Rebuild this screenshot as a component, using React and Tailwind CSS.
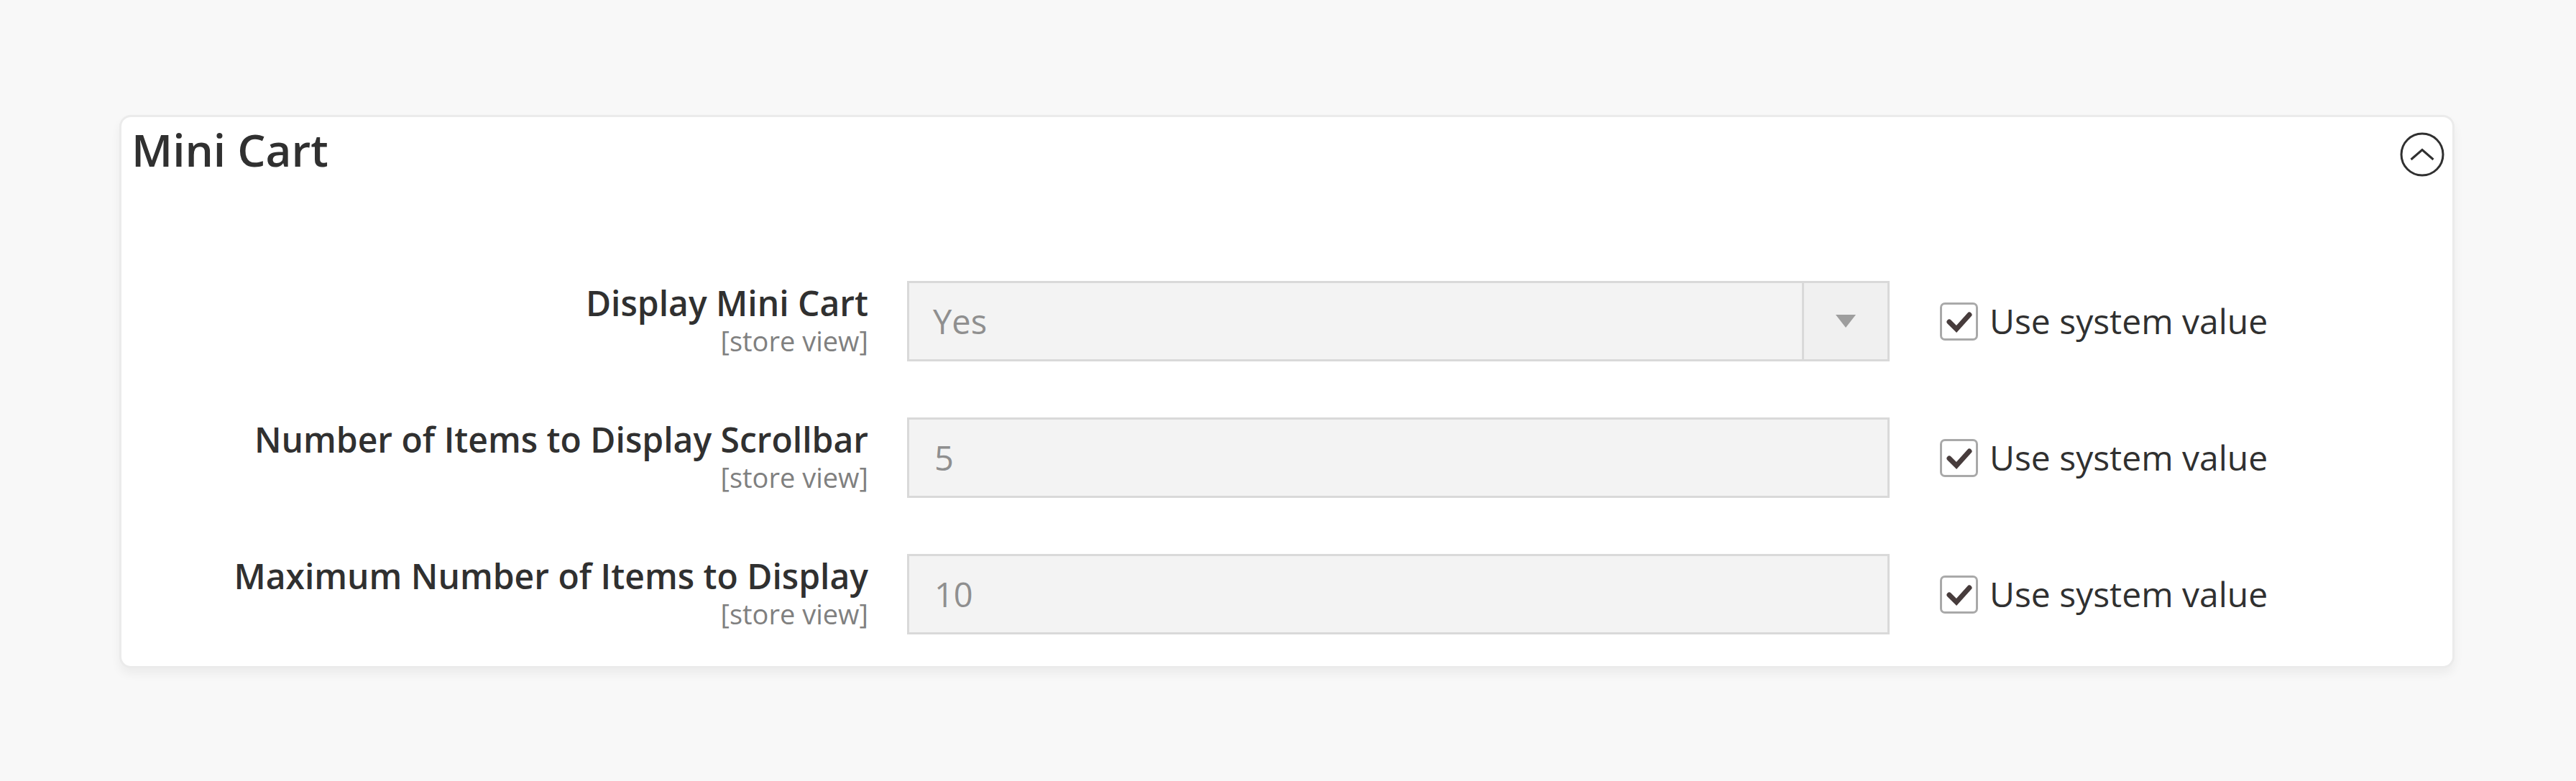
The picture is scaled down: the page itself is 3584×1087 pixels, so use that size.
import React from "react";

const FONT = { fontFamily: '"Open Sans", "Noto Sans", sans-serif' };

function Check() {
  return (
    <div className="flex h-[53px] w-[53px] shrink-0 items-center justify-center rounded-[7px] border-[3px] border-[#a9a9a9] bg-white">
      <svg width="40" height="40" viewBox="0 0 40 40">
        <path d="M6 21 L16 31 L34 11" fill="none" stroke="#473c3c" strokeWidth="7" strokeLinecap="round" strokeLinejoin="miter" />
      </svg>
    </div>
  );
}

function Row({ label, children }) {
  return (
    <div className="flex items-start">
      <div className="flex w-[1025px] shrink-0 flex-col items-end pt-[5px] text-right">
        <div className="text-[48px] leading-[52px] font-semibold text-[#303030]">{label}</div>
        <div className="mt-[6px] text-[38px] leading-[40px] text-[#808080]">[store view]</div>
      </div>
      <div className="ml-[54px] w-[1367px] shrink-0">{children}</div>
      <div className="ml-[70px] flex h-[112px] items-center">
        <Check />
        <span className="ml-[16px] text-[48px] leading-[56px] text-[#303030]">Use system value</span>
      </div>
    </div>
  );
}

function TextInput({ value }) {
  return (
    <div className="flex h-[112px] items-center border-[3px] border-[#d9d9d9] bg-[#f3f3f3] pl-[35px] text-[47px] text-[#8f8f8f]">
      {value}
    </div>
  );
}

function SelectBox({ value }) {
  return (
    <div className="flex h-[112px] border-[3px] border-[#d9d9d9] bg-[#f3f3f3]">
      <div className="flex flex-1 items-center pl-[33px] text-[47px] text-[#8f8f8f]">{value}</div>
      <div className="flex w-[119px] items-center justify-center border-l-[3px] border-[#d9d9d9] bg-[#f0f0f0]">
        <svg width="28" height="18" viewBox="0 0 28 18">
          <path d="M0 0 H28 L14 18 Z" fill="#9e9e9e" />
        </svg>
      </div>
    </div>
  );
}

export default function App() {
  return (
    <div className="h-[1087px] w-full bg-[#f8f8f8] pl-[166px] pr-[169px] pt-[160px]" style={FONT}>
      <div className="rounded-[16px] border-[3px] border-[#ebebeb] bg-white px-[14px] pt-[8px] pb-[44px] shadow-[0_8px_14px_rgba(0,0,0,0.05)]">
        <div className="flex items-start justify-between">
          <h2 className="text-[62px] leading-[74px] font-semibold text-[#303030]">Mini Cart</h2>
          <svg className="mt-[12px] mr-[-4px]" width="64" height="64" viewBox="0 0 64 64">
            <circle cx="32" cy="32" r="29" fill="none" stroke="#303030" strokeWidth="3" />
            <path d="M16.5 39 L32 25.5 L47.5 39" fill="none" stroke="#303030" strokeWidth="3" />
          </svg>
        </div>
        <div className="mt-[144px] flex flex-col gap-[78px]">
          <Row label="Display Mini Cart">
            <SelectBox value="Yes" />
          </Row>
          <Row label="Number of Items to Display Scrollbar">
            <TextInput value="5" />
          </Row>
          <Row label="Maximum Number of Items to Display">
            <TextInput value="10" />
          </Row>
        </div>
      </div>
    </div>
  );
}
